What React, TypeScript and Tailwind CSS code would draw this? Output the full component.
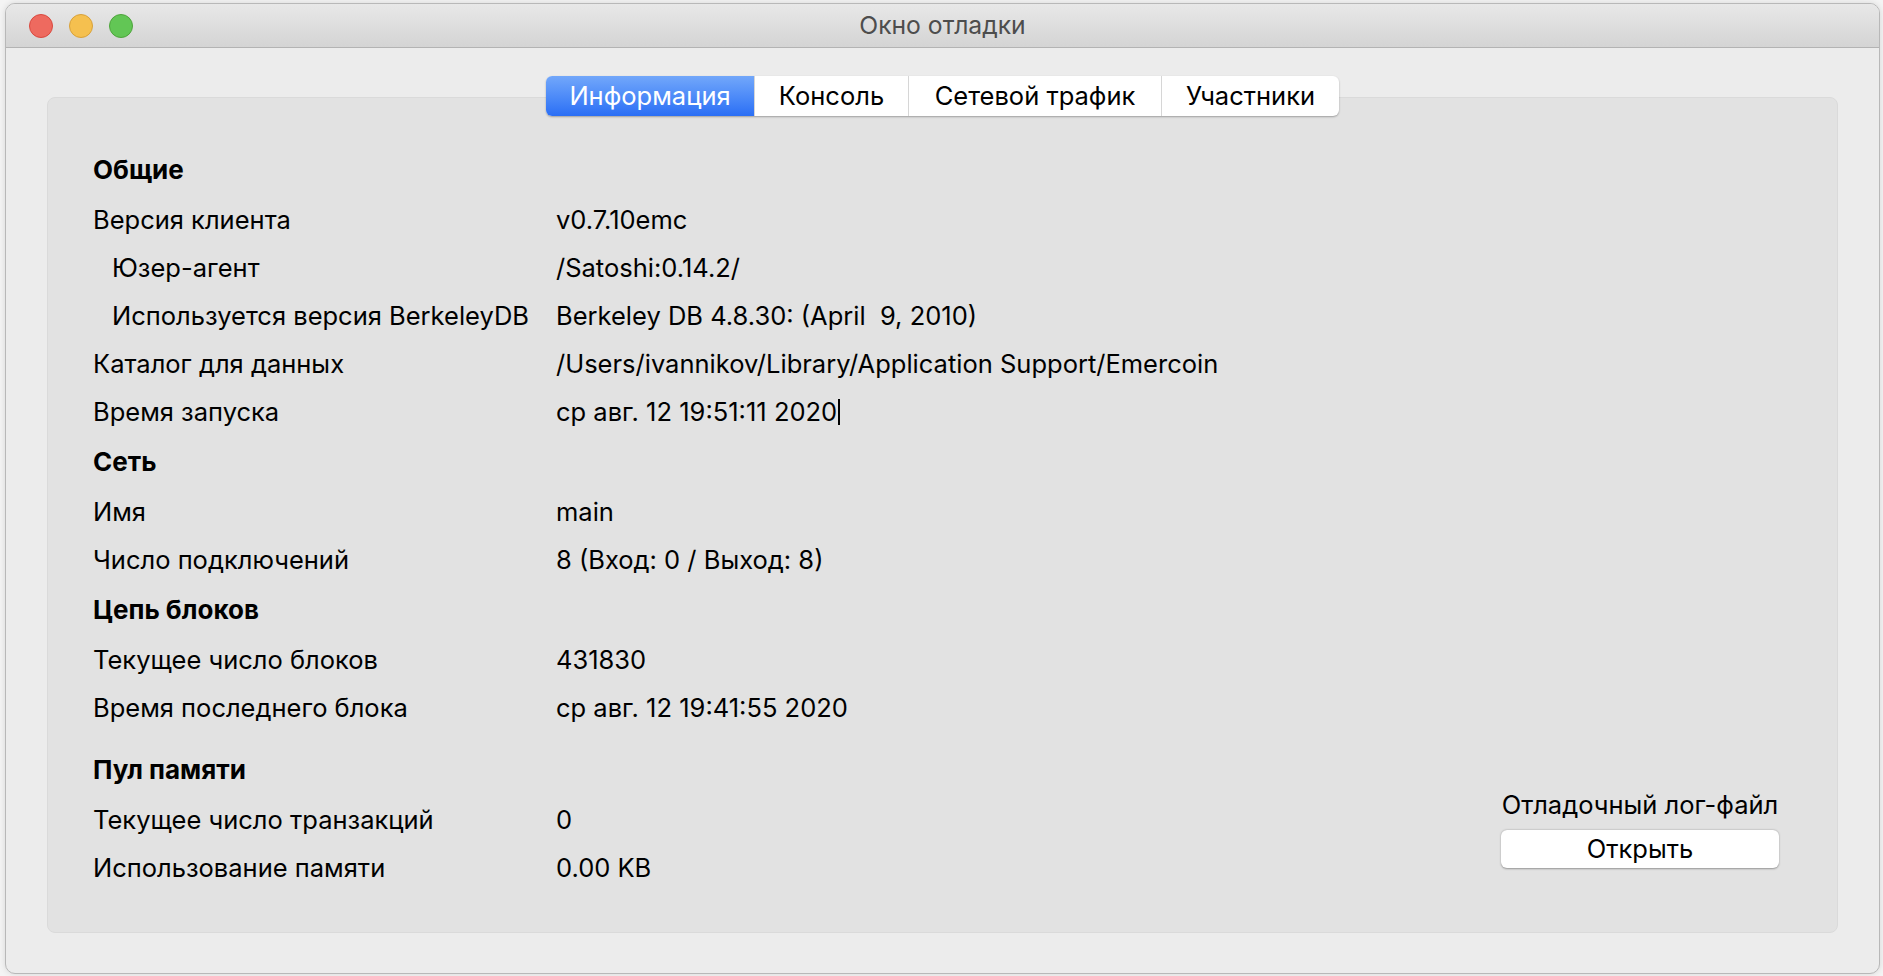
import React from "react";

type Row = { label: string; value?: string; indent?: boolean; caret?: boolean };
type Section = { title: string; rows: Row[]; extraTop?: boolean };

const sections: Section[] = [
  {
    title: "Общие",
    rows: [
      { label: "Версия клиента", value: "v0.7.10emc" },
      { label: "Юзер-агент", value: "/Satoshi:0.14.2/", indent: true },
      { label: "Используется версия BerkeleyDB", value: "Berkeley DB 4.8.30: (April  9, 2010)", indent: true },
      { label: "Каталог для данных", value: "/Users/ivannikov/Library/Application Support/Emercoin" },
      { label: "Время запуска", value: "ср авг. 12 19:51:11 2020", caret: true },
    ],
  },
  {
    title: "Сеть",
    rows: [
      { label: "Имя", value: "main" },
      { label: "Число подключений", value: "8 (Вход: 0 / Выход: 8)" },
    ],
  },
  {
    title: "Цепь блоков",
    rows: [
      { label: "Текущее число блоков", value: "431830" },
      { label: "Время последнего блока", value: "ср авг. 12 19:41:55 2020" },
    ],
  },
  {
    title: "Пул памяти",
    extraTop: true,
    rows: [
      { label: "Текущее число транзакций", value: "0" },
      { label: "Использование памяти", value: "0.00 KB" },
    ],
  },
];

const tabs = ["Информация", "Консоль", "Сетевой трафик", "Участники"];
const tabWidths = ["w-[208px]", "w-[154px]", "w-[253px]", "w-[178px]"];

function TrafficLights() {
  return (
    <div className="flex items-center gap-[16px] pl-[23px]">
      <span className="h-[24px] w-[24px] rounded-full border border-[#d9493f] bg-[#ee6a5f]" />
      <span className="h-[24px] w-[24px] rounded-full border border-[#d8a13a] bg-[#f5c04f]" />
      <span className="h-[24px] w-[24px] rounded-full border border-[#4ea43c] bg-[#62c655]" />
    </div>
  );
}

function InfoRow({ row }: { row: Row }) {
  return (
    <div className="flex h-[48px] items-center text-[25.5px] text-black">
      <div className={`w-[463px] shrink-0 ${row.indent ? "pl-[19px]" : ""}`}>{row.label}</div>
      <div className="flex items-center whitespace-pre">
        {row.value}
        {row.caret && <span className="ml-[1px] inline-block h-[26px] w-[1.5px] bg-black" />}
      </div>
    </div>
  );
}

export default function App() {
  return (
    <div
      className="h-[976px] w-[1883px] overflow-hidden bg-[#f4f4f4] pl-[5px] pt-[3px]"
      style={{ fontFamily: 'Inter, "Liberation Sans", Arial, sans-serif' }}
    >
      <div className="flex h-[971px] w-[1875px] flex-col overflow-hidden rounded-[10px] border border-[#b8b8b8] bg-[#ececec] shadow-[0_0_6px_rgba(0,0,0,0.12)]">
        {/* Title bar */}
        <div className="relative flex h-[44px] shrink-0 items-center border-b border-[#b3b3b3] bg-gradient-to-b from-[#e8e8e8] to-[#d4d4d4]">
          <TrafficLights />
          <div className="absolute inset-0 flex items-center justify-center text-[24.7px] text-[#4d4d4d]">
            Окно отладки
          </div>
        </div>

        {/* Tabs */}
        <div className="relative z-10 mt-[28px] flex justify-center">
          <div className="flex h-[40px] overflow-hidden rounded-[6px] bg-white shadow-[0_1px_2px_rgba(0,0,0,0.3)]">
            {tabs.map((t, i) => (
              <div
                key={t}
                className={`flex items-center justify-center text-[25.5px] ${tabWidths[i]} ${
                  i === 0
                    ? "bg-gradient-to-b from-[#72a7fa] to-[#2a6ef5] text-white"
                    : "border-l border-[#d6d6d6] text-black"
                }`}
              >
                {t}
              </div>
            ))}
          </div>
        </div>

        {/* Panel */}
        <div className="mx-[41px] -mt-[19px] flex h-[836px] rounded-[8px] border border-[#dadada] bg-[#e2e2e2]">
          <div className="flex-1 pl-[45px] pt-[46px]">
            {sections.map((s) => (
              <div key={s.title} className={s.extraTop ? "mt-[12px]" : ""}>
                <div className="mb-[2px] flex h-[50px] items-center text-[26px] font-bold text-black">
                  {s.title}
                </div>
                {s.rows.map((r) => (
                  <InfoRow key={r.label} row={r} />
                ))}
              </div>
            ))}
          </div>
          <div className="flex flex-col items-center justify-end pb-[64px] pr-[58px]">
            <div className="mb-[11px] text-[25.5px] leading-[28px] text-black">Отладочный лог-файл</div>
            <button className="h-[38px] w-[278px] rounded-[6px] bg-white text-[25.5px] text-black shadow-[0_0.5px_2px_rgba(0,0,0,0.35)]">
              Открыть
            </button>
          </div>
        </div>
      </div>
    </div>
  );
}
